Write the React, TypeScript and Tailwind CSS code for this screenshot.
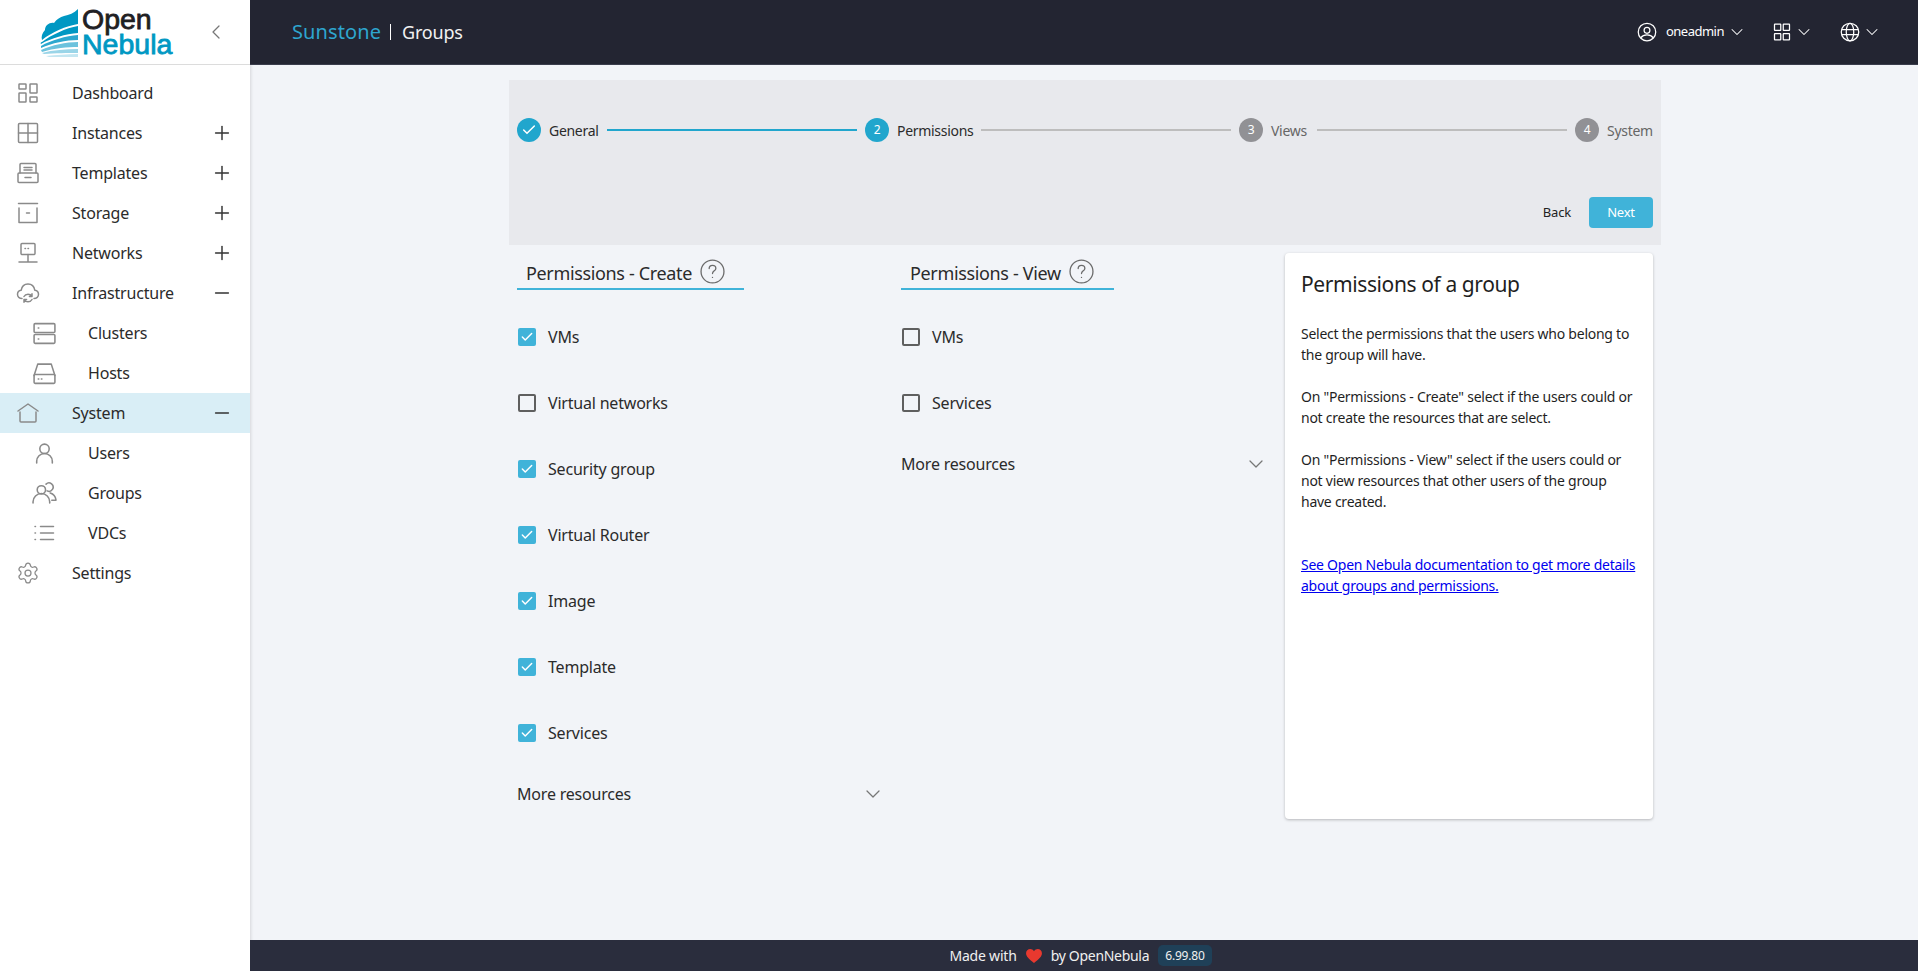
import { useState, type ReactNode } from "react";
import { Check, ChevronDown, ChevronLeft, Minus, Plus, Settings } from "lucide-react";

const fontStack = { fontFamily: '"Noto Sans", sans-serif' };

function Ico({ children, size = 24, className = "" }: { children: ReactNode; size?: number; className?: string }) {
  return (
    <svg width={size} height={size} viewBox="0 0 24 24" fill="none" stroke="currentColor" strokeWidth="1.5" strokeLinecap="round" strokeLinejoin="round" className={className}>
      {children}
    </svg>
  );
}

const icons: Record<string, ReactNode> = {
  dashboard: (
    <>
      <rect x="3" y="3" width="7" height="5" rx="0.5" />
      <rect x="3" y="12" width="7" height="9" rx="0.5" />
      <rect x="14" y="3" width="7" height="9" rx="0.5" />
      <rect x="14" y="16" width="7" height="5" rx="0.5" />
    </>
  ),
  instances: (
    <>
      <rect x="2.5" y="2.5" width="19" height="19" rx="1" />
      <path d="M12 2.5v19M2.5 12h19" />
    </>
  ),
  templates: (
    <>
      <path d="M4 12V3.5a1 1 0 0 1 1-1h14a1 1 0 0 1 1 1V12" />
      <rect x="2" y="12" width="20" height="9.5" rx="1" />
      <path d="M8 6.500h8M8 9h8M9 16.500h6" />
    </>
  ),
  storage: (
    <>
      <path d="M2.500 2.500h19M3 7v14.500h18V7" />
      <path d="M10.500 12h3" />
    </>
  ),
  networks: (
    <>
      <rect x="5" y="2.5" width="14" height="11" rx="1" />
      <path d="M12 13.500v7M3 21h18M9 7.500h.5M12 7.500h.5" />
    </>
  ),
  infrastructure: (
    <>
      <path d="M6 17.500c-2.500 0-4.500-1.700-4.500-4.200 0-2.200 1.600-3.800 3.700-4.100C5.800 5.500 8.600 3 12 3s6.200 2.500 6.800 6.200c2.100.3 3.700 1.900 3.700 4.100 0 2.500-2 4.200-4.500 4.200" />
      <path d="M8 15.500c.8-1.500 2.300-2.300 4-2.300s3 .8 3.800 2M16 12.800v2.700h-2.600M16 18.500c-.8 1.500-2.300 2.300-4 2.300s-3-.8-3.800-2M8 21.200v-2.700h2.600" />
    </>
  ),
  clusters: (
    <>
      <rect x="2" y="2.500" width="20" height="8.500" rx="1" />
      <rect x="2" y="13" width="20" height="8.500" rx="1" />
      <path d="M6 6.750h.5M6 17.250h.5" />
    </>
  ),
  hosts: (
    <>
      <path d="M2 14 5.500 3h13L22 14" />
      <rect x="2" y="13" width="20" height="8.500" rx="1" />
      <path d="M6 17.250h.5M9 17.250h.5" />
    </>
  ),
  system: (
    <>
      <path d="M2 10 12 3l10 7" />
      <path d="M4 11v9a1 1 0 0 0 1 1h14a1 1 0 0 0 1-1v-9" />
    </>
  ),
  users: (
    <>
      <circle cx="12" cy="7.500" r="4.500" />
      <path d="M4.500 21v-1.500a7.500 7.500 0 0 1 15 0V21" />
    </>
  ),
  groups: (
    <>
      <circle cx="9" cy="8.500" r="4" />
      <path d="M1 21v-1a8 8 0 0 1 16 0v1" />
      <path d="M14.500 9.500a4 4 0 1 0-1-6.500M19 18.500h4v-.500a8 8 0 0 0-5.500-6.500" />
    </>
  ),
  vdcs: (
    <>
      <path d="M8.500 5.500h13M8.500 12h13M8.500 18.500h13M3 5.500h.5M3 12h.5M3 18.500h.5" />
    </>
  ),
};

type NavItem = { label: string; icon: string; sub?: number; toggle?: "plus" | "minus"; active?: boolean };

const navItems: NavItem[] = [
  { label: "Dashboard", icon: "dashboard" },
  { label: "Instances", icon: "instances", toggle: "plus" },
  { label: "Templates", icon: "templates", toggle: "plus" },
  { label: "Storage", icon: "storage", toggle: "plus" },
  { label: "Networks", icon: "networks", toggle: "plus" },
  { label: "Infrastructure", icon: "infrastructure", toggle: "minus" },
  { label: "Clusters", icon: "clusters", sub: 25 },
  { label: "Hosts", icon: "hosts", sub: 25 },
  { label: "System", icon: "system", toggle: "minus", active: true },
  { label: "Users", icon: "users", sub: 25 },
  { label: "Groups", icon: "groups", sub: 25 },
  { label: "VDCs", icon: "vdcs", sub: 24 },
  { label: "Settings", icon: "settings" },
];

function Logo() {
  return (
    <div className="flex items-center">
      <svg width="38" height="48" viewBox="0 0 38 48" className="mr-[4px] mt-[2px]">
        <path d="M38 0v15C26 17 12 23 2 31c-1-3 0-7 3-10 0-5 5-8 9-7 3-4 6-6 10-7 5-1 10-3 14-7z" fill="#0098c3" />
        <path d="M38 17v7C26 25 11 29 1 35c-1-1 0-2 1-2C11 26 26 19 38 17z" fill="#0098c3" />
        <path d="M38 26v5C26 31 12 34 1 39v-2c10-6 25-10 37-11z" fill="#2ea8cf" />
        <path d="M38 33v5C28 38 14 39 2 43l-1-2c11-5 25-8 37-8z" fill="#6cc2dd" />
        <path d="M38 40v4C28 44 15 44 4 45l-2-1c11-3 24-4 36-4z" fill="#9ad5e8" />
        <path d="M38 45v3H9c-1 0-2-1-3-1 10-1 21-2 32-2z" fill="#c3e6f1" />
      </svg>
      <div className="flex flex-col text-[28.500px] leading-[25px] tracking-normal [-webkit-text-stroke:0.8px]" style={{ fontFamily: '"Liberation Sans", sans-serif' }}>
        <span className="text-[#1f2023]">Open</span>
        <span className="text-[#0098c3]">Nebula</span>
      </div>
    </div>
  );
}

function Sidebar() {
  return (
    <aside className="flex h-full w-[250px] shrink-0 flex-col bg-white shadow-[1px_0_3px_rgba(0,0,0,0.12)]">
      <div className="flex h-[65px] shrink-0 items-center justify-between border-b border-[#dcdcdc] pl-[40px] pr-[22px]">
        <Logo />
        <ChevronLeft className="h-[24px] w-[24px] text-[#777]" strokeWidth={1.25} />
      </div>
      <nav className="pt-[8px]">
        {navItems.map((item) => (
          <div key={item.label} className={`flex h-[40px] items-center pr-[17px] ${item.sub ? "pl-[32px]" : "pl-[16px]"} ${item.active ? "bg-[#d9eef6]" : ""}`}>
            <span className="mr-[32px] flex w-[24px] justify-center text-[#8a8a8a]">
              {item.icon === "settings" ? (
                <Settings className="h-[24px] w-[24px]" strokeWidth={1.25} />
              ) : (
                <Ico size={item.sub ?? 24} className="shrink-0">{icons[item.icon]}</Ico>
              )}
            </span>
            <span className="flex-1 text-[16px] text-[#2b2b2b]">{item.label}</span>
            {item.toggle === "plus" && <Plus className="h-[22px] w-[22px] text-[#333]" strokeWidth={1.6} />}
            {item.toggle === "minus" && <Minus className="h-[22px] w-[22px] text-[#333]" strokeWidth={1.6} />}
          </div>
        ))}
      </nav>
    </aside>
  );
}

function Header() {
  return (
    <header className="flex h-[65px] shrink-0 items-center justify-between border-b border-[#3a3d4c] bg-[#232532] pl-[42px] pr-[36px]">
      <div className="flex items-center text-white">
        <span className="text-[20px] tracking-[0.1px] text-[#2ea6cf]">Sunstone</span>
        <span className="ml-[9px] mr-[11px] h-[16px] w-px bg-white" />
        <span className="text-[18px] text-[#f2f2f2]">Groups</span>
      </div>
      <div className="flex items-center text-white">
        <svg width="20" height="20" viewBox="0 0 24 24" fill="none" stroke="currentColor" strokeWidth="1.5">
          <circle cx="12" cy="12" r="10.500" />
          <circle cx="12" cy="10" r="3.500" />
          <path d="M4.500 19c2-2.800 4.500-3.500 7.500-3.500s5.500.7 7.500 3.500" />
        </svg>
        <span className="ml-[9px] text-[13px] tracking-[-0.5px]">oneadmin</span>
        <ChevronDown className="ml-[3px] h-[20px] w-[20px]" strokeWidth={1.25} />
        <svg className="ml-[25px]" width="20" height="20" viewBox="0 0 24 24" fill="none" stroke="currentColor" strokeWidth="1.5">
          <rect x="3" y="2.500" width="7.500" height="7.500" rx="0.500" />
          <rect x="13.500" y="2.500" width="7.500" height="7.500" rx="0.500" />
          <rect x="3" y="14" width="7.500" height="7.500" rx="0.500" />
          <rect x="13.500" y="14" width="7.500" height="7.500" rx="0.500" />
        </svg>
        <ChevronDown className="ml-[2px] h-[20px] w-[20px]" strokeWidth={1.25} />
        <svg className="ml-[26px]" width="20" height="20" viewBox="0 0 24 24" fill="none" stroke="currentColor" strokeWidth="1.5">
          <circle cx="12" cy="12" r="10.500" />
          <ellipse cx="12" cy="12" rx="4.500" ry="10.500" />
          <path d="M2 9h20M2 15h20" />
        </svg>
        <ChevronDown className="ml-[2px] h-[20px] w-[20px]" strokeWidth={1.25} />
      </div>
    </header>
  );
}

const steps = [
  { n: "1", label: "General", state: "done", labelW: "w-[50px]" },
  { n: "2", label: "Permissions", state: "active", labelW: "w-[76px]" },
  { n: "3", label: "Views", state: "todo", labelW: "w-[38px]" },
  { n: "4", label: "System", state: "todo", labelW: "w-[46px]" },
];

function Stepper() {
  return (
    <div className="flex h-[165px] flex-col bg-[#e8e9ed] px-[8px] pb-[17px] pt-[38px]">
      <div className="flex items-center">
        {steps.map((s, i) => (
          <div key={s.n} className="flex items-center">
            <span className={`flex h-[24px] w-[24px] items-center justify-center rounded-full text-[12px] text-white ${s.state === "todo" ? "bg-[#919195]" : "bg-[#21a6cd]"}`}>
              {s.state === "done" ? <Check className="h-[16px] w-[16px]" strokeWidth={2.25} /> : s.n}
            </span>
            <span className={`ml-[8px] whitespace-nowrap text-[14px] tracking-[-0.3px] ${s.labelW} ${s.state === "todo" ? "text-[#666]" : "text-[#2b2b2b]"}`}>{s.label}</span>
            {i < 3 && <span className={`mx-[8px] h-[2px] w-[250px] ${s.state === "done" ? "bg-[#21a6cd]" : "bg-[#bdbdbd]"}`} />}
          </div>
        ))}
      </div>
      <div className="mt-auto flex items-center justify-end">
        <span className="mr-[18px] text-[13px] text-[#222]">Back</span>
        <span className="flex h-[31px] w-[64px] items-center justify-center rounded-[4px] bg-[#40b3d9] text-[13px] text-white">Next</span>
      </div>
    </div>
  );
}

function CheckRow({ label, checked }: { label: string; checked: boolean }) {
  return (
    <div className="flex h-[66px] items-center pl-[1px]">
      {checked ? (
        <span className="flex h-[18px] w-[18px] items-center justify-center rounded-[2px] bg-[#40b3d9]">
          <Check className="h-[14px] w-[14px] text-white" strokeWidth={2.5} />
        </span>
      ) : (
        <span className="h-[18px] w-[18px] rounded-[2px] border-2 border-[#5f5f5f]" />
      )}
      <span className="ml-[12px] text-[16px] text-[#2b2b2b]">{label}</span>
    </div>
  );
}

function PermColumn({ title, items, width, lineW, morePr }: { title: string; items: [string, boolean][]; width: string; lineW: string; morePr: string }) {
  return (
    <div className={width}>
      <div className={`flex h-[37px] items-center border-b-2 border-[#40b3d9] pl-[9px] pt-[5px] ${lineW}`}>
        <span className="text-[18px] tracking-[-0.35px] text-[#2b2b2b]">{title}</span>
        <svg className="ml-[8px] mt-[-3px]" width="25" height="25" viewBox="0 0 24 24" fill="none" stroke="#6b6b6b" strokeWidth="1.25" strokeLinecap="round">
          <circle cx="12" cy="12" r="11" />
          <path d="M8.800 9.200c0-1.900 1.400-3.100 3.200-3.100s3.200 1.200 3.200 2.900c0 2.400-3.200 2.300-3.200 5" />
          <path d="M12 17.600v.1" />
        </svg>
      </div>
      <div className="pt-[14px]">
        {items.map(([label, checked]) => (
          <CheckRow key={label} label={label} checked={checked} />
        ))}
      </div>
      <div className={`flex h-[56px] items-center justify-between ${morePr}`}>
        <span className="text-[16px] text-[#2b2b2b]">More resources</span>
        <ChevronDown className="h-[24px] w-[24px] text-[#777]" strokeWidth={1.25} />
      </div>
    </div>
  );
}

function HelpCard() {
  return (
    <div className="h-[566px] w-[368px] rounded-[4px] bg-white px-[16px] pt-[16px] shadow-[0_1px_3px_rgba(0,0,0,0.25)]">
      <h2 className="text-[21px] leading-[30px] tracking-[-0.4px] text-[#1f1f1f]">Permissions of a group</h2>
      <div className="mt-[24px] text-[14px] leading-[21px] tracking-[-0.25px] text-[#1f1f1f]">
        <p>Select the permissions that the users who belong to the group will have.</p>
        <p className="mt-[21px]">On "Permissions - Create" select if the users could or not create the resources that are select.</p>
        <p className="mt-[21px]">On "Permissions - View" select if the users could or not view resources that other users of the group have created.</p>
        <a className="mt-[42px] block text-[#0000ee] underline" href="#">See Open Nebula documentation to get more details about groups and permissions.</a>
      </div>
    </div>
  );
}

export default function App() {
  const [createPerms] = useState<[string, boolean][]>([
    ["VMs", true],
    ["Virtual networks", false],
    ["Security group", true],
    ["Virtual Router", true],
    ["Image", true],
    ["Template", true],
    ["Services", true],
  ]);
  const viewPerms: [string, boolean][] = [
    ["VMs", false],
    ["Services", false],
  ];
  return (
    <div className="flex h-[971px] w-full overflow-hidden bg-[#f2f4f8] tracking-[-0.2px]" style={fontStack}>
      <Sidebar />
      <div className="flex min-w-0 flex-1 flex-col">
        <Header />
        <main className="flex-1 overflow-hidden pl-[2px] pt-[15px]">
          <div className="mx-auto w-[1152px]">
            <Stepper />
            <div className="flex px-[8px] pt-[8px]">
              <PermColumn title="Permissions - Create" items={createPerms} width="w-[384px]" lineW="w-[227px]" morePr="pr-[16px]" />
              <PermColumn title="Permissions - View" items={viewPerms} width="w-[368px]" lineW="w-[213px]" morePr="pr-[1px]" />
              <div className="ml-[16px]">
                <HelpCard />
              </div>
            </div>
          </div>
        </main>
        <footer className="flex h-[31px] shrink-0 items-center justify-center bg-[#2a2d3d] pr-[7px] text-[14px] text-[#f0f0f0]">
          <span>Made with</span>
          <svg className="mx-[9px]" width="16" height="14" viewBox="0 0 17 15">
            <path d="M8.500 15C3 10.500 0 8 0 4.500 0 2 2 0 4.500 0c1.600 0 3 .8 4 2.300C9.500.8 10.900 0 12.500 0 15 0 17 2 17 4.500 17 8 14 10.500 8.500 15z" fill="#e8392f" />
          </svg>
          <span className="tracking-[-0.3px]">by OpenNebula</span>
          <span className="ml-[9px] flex h-[21px] items-center rounded-[5px] bg-[#1f4058] px-[7px] text-[12px]">6.99.80</span>
        </footer>
      </div>
    </div>
  );
}
